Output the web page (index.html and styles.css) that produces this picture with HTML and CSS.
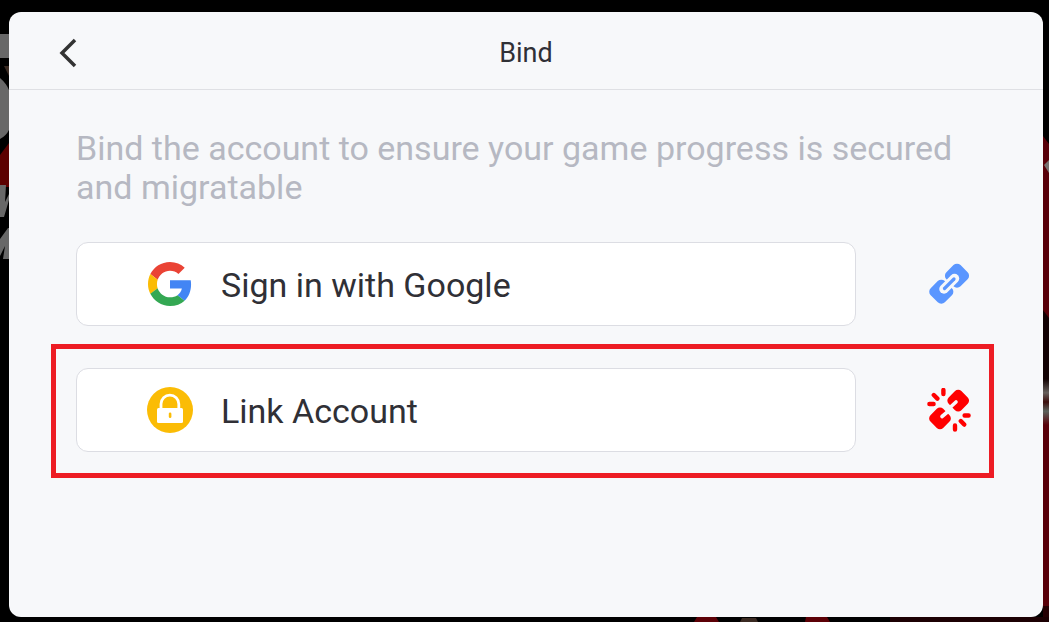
FILE: index.html
```html
<!DOCTYPE html>
<html lang="en">
<head>
    <meta charset="UTF-8">
    <meta name="viewport" content="width=device-width, initial-scale=1.0">
    <title>Bind</title>
    <link rel="stylesheet" href="styles.css">
</head>
<body>

    <!-- Game art behind the dialog -->
    <svg class="backdrop backdrop-left" width="9" height="280" viewBox="0 0 9 280" aria-hidden="true">
        <path d="M0 34h9v24H0z" fill="#686868"/>
        <path d="M4 66h5v10z" fill="#3a2a22"/>
        <path d="M0 78q6 5 9 12v40q-3 6-9 9z" fill="#686868"/>
        <path d="M0 155l9-12v44H0z" fill="#5c0000"/>
        <path d="M0 185h6l-1 17 4-8v6l-5 17H0z" fill="#686868"/>
        <path d="M0 239l8-11h1v31H3l2-13-5 10z" fill="#686868"/>
    </svg>
    <svg class="backdrop backdrop-right" width="6" height="622" viewBox="0 0 6 622" aria-hidden="true">
        <defs>
            <linearGradient id="shade" x1="0" y1="0" x2="0" y2="1">
                <stop offset="0" stop-color="#120203"/>
                <stop offset="0.6" stop-color="#120203"/>
                <stop offset="0.72" stop-color="#66605c"/>
                <stop offset="0.8" stop-color="#3c0e0c"/>
                <stop offset="0.88" stop-color="#5c625c"/>
                <stop offset="1" stop-color="#590009"/>
            </linearGradient>
        </defs>
        <path d="M0 136l6 8v478H0z" fill="#590009"/>
        <path d="M1 165l5-5v13z" fill="#77706f"/>
        <path d="M0 310l6 8v107H0z" fill="url(#shade)"/>
        <path d="M0 606h6v16H0z" fill="#250003"/>
    </svg>
    <svg class="backdrop backdrop-bottom" width="409" height="5" viewBox="0 0 409 5" aria-hidden="true">
        <path d="M250 0h159v5H250z" fill="#1c0003"/>
        <path d="M57 0h19l3 5H54zM166 0h21l3 5h-25z" fill="#5c0006"/>
        <path d="M102 1h14l2 4h-18z" fill="#3a2a22"/>
    </svg>

    <main class="dialog">
        <header class="dialog-header">
            <button class="back-button" type="button" aria-label="Back">
                <svg width="20" height="32" viewBox="0 0 20 32">
                    <path d="M18 3L5 16l13 13" fill="none" stroke="#333" stroke-width="3.5"/>
                </svg>
            </button>
            <h1>Bind</h1>
        </header>

        <section class="dialog-body">
            <p class="message">Bind the account to ensure your game progress is secured and migratable</p>

            <ul class="accounts">
                <li class="account">
                    <button class="account-button" type="button">
                        <span class="account-icon">
                            <svg width="44" height="44" viewBox="0 0 48 48">
                                <path fill="#EA4335" d="M24 9.5c3.54 0 6.71 1.22 9.21 3.6l6.85-6.85C35.9 2.38 30.47 0 24 0 14.62 0 6.51 5.38 2.56 13.22l7.98 6.19C12.43 13.72 17.74 9.5 24 9.5z"/>
                                <path fill="#4285F4" d="M46.98 24.55c0-1.57-.15-3.09-.38-4.55H24v9.02h12.94c-.58 2.96-2.26 5.48-4.78 7.18l7.73 6c4.51-4.18 7.09-10.36 7.09-17.65z"/>
                                <path fill="#FBBC05" d="M10.53 28.59c-.48-1.45-.76-2.99-.76-4.59s.27-3.14.76-4.59l-7.98-6.19C.92 16.46 0 20.12 0 24c0 3.88.92 7.54 2.56 10.78l7.97-6.19z"/>
                                <path fill="#34A853" d="M24 48c6.48 0 11.93-2.13 15.89-5.81l-7.73-6c-2.15 1.45-4.92 2.3-8.16 2.3-6.26 0-11.57-4.22-13.47-9.91l-7.98 6.19C6.51 42.62 14.62 48 24 48z"/>
                            </svg>
                        </span>
                        <span class="account-name">Sign in with Google</span>
                    </button>
                    <button class="link-button" type="button" aria-label="Bind Google">
                        <svg width="44" height="44" viewBox="0 0 44 44">
                            <g fill="#5a96ff">
                                <rect x="20" y="3.7" width="20" height="20" rx="5" transform="rotate(45 30 13.7)"/>
                                <rect x="4.3" y="19.7" width="20" height="20" rx="5" transform="rotate(45 14.3 29.7)"/>
                            </g>
                            <path d="M17 27L27.500 16.500" fill="none" stroke="#f7f8fa" stroke-width="9.5" stroke-linecap="round"/>
                            <path d="M17.500 26.500L27 17" fill="none" stroke="#5a96ff" stroke-width="3.2" stroke-linecap="round"/>
                        </svg>
                    </button>
                </li>
                <li class="account highlighted">
                    <button class="account-button" type="button">
                        <span class="account-icon">
                            <svg width="46" height="46" viewBox="0 0 46 46">
                                <circle cx="23" cy="23" r="23" fill="#fbbc05"/>
                                <path d="M14 22v-5a8.9 8.9 0 0 1 17.8 0v5" fill="none" stroke="#fff" stroke-width="2.8"/>
                                <rect x="10" y="21" width="26" height="15" rx="1.5" fill="#fff"/>
                                <rect x="21.8" y="25.5" width="2.6" height="5.6" rx="1.3" fill="#fbbc05"/>
                            </svg>
                        </span>
                        <span class="account-name">Link Account</span>
                    </button>
                    <button class="link-button" type="button" aria-label="Unbind Link Account">
                        <svg width="44" height="44" viewBox="0 0 44 44">
                            <g fill="#f00">
                                <rect x="22.2" y="3.6" width="18" height="18" rx="4.5" transform="rotate(45 31.2 12.6)"/>
                                <rect x="4" y="21.4" width="18" height="18" rx="4.5" transform="rotate(45 13 30.4)"/>
                            </g>
                            <path d="M23 19.5L29 14M21 23.5L15 28.500" fill="none" stroke="#f7f8fa" stroke-width="3.6" stroke-linecap="round"/>
                            <path d="M16.4 2v4M6.8 7l3.600 3.600M2.4 16h4.200M28 37.500v4M33.800 33l3.400 3.600M37.600 27.500h4" fill="none" stroke="#f00" stroke-width="4.4" stroke-linecap="round"/>
                        </svg>
                    </button>
                </li>
            </ul>
        </section>
    </main>

</body>
</html>
```

FILE: styles.css
```css
* {
    box-sizing: border-box;
}

body {
    margin: 0;
    padding: 12px 6px 5px 9px;
    min-height: 100vh;
    display: flex;
    background-color: #000;
    color: #303036;
    font-family: Roboto, sans-serif;
}

button {
    padding: 0;
    border: none;
    background: none;
    color: inherit;
    font-family: inherit;
    cursor: pointer;
}

svg {
    display: block;
}

/* Backdrop */
.backdrop {
    position: absolute;
}

.backdrop-left {
    top: 0;
    left: 0;
}

.backdrop-right {
    top: 0;
    right: 0;
}

.backdrop-bottom {
    right: 0;
    bottom: 0;
}

/* Dialog */
.dialog {
    flex: 1;
    background-color: #f7f8fa;
    border-radius: 12px;
    position: relative;
}

.dialog-header {
    display: grid;
    grid-template-columns: 48px 1fr 48px;
    align-items: center;
    height: 78px;
    padding: 4px 48px 0;
    border-bottom: 1px solid #dfe0e4;
}

h1 {
    margin: 0;
    font-size: 27px;
    font-weight: 400;
    line-height: 40px;
    text-align: center;
}

.dialog-body {
    padding: 39px 49px 24px 42px;
}

.message {
    margin: 0 25px 35px;
    color: #b6b8c2;
    font-size: 34px;
    line-height: 39px;
}

/* Account rows */
.accounts {
    margin: 0;
    padding: 0;
    list-style: none;
}

.account {
    display: flex;
    align-items: center;
    gap: 71px;
    padding: 0 18px 0 20px;
    border: solid transparent;
    border-width: 0 5px;
}

.highlighted {
    margin-top: 18px;
    padding-top: 19px;
    padding-bottom: 21px;
    border: 5px solid #ed1c24;
}

.account-button {
    flex: 1;
    display: flex;
    align-items: center;
    gap: 28px;
    height: 84px;
    padding: 0 70px;
    border: 1px solid #dcdde3;
    border-radius: 12px;
    background-color: #fff;
    font-size: 34px;
}

.account-icon {
    display: flex;
    justify-content: center;
    width: 46px;
}

.account-name {
    padding-top: 2px;
}
```
